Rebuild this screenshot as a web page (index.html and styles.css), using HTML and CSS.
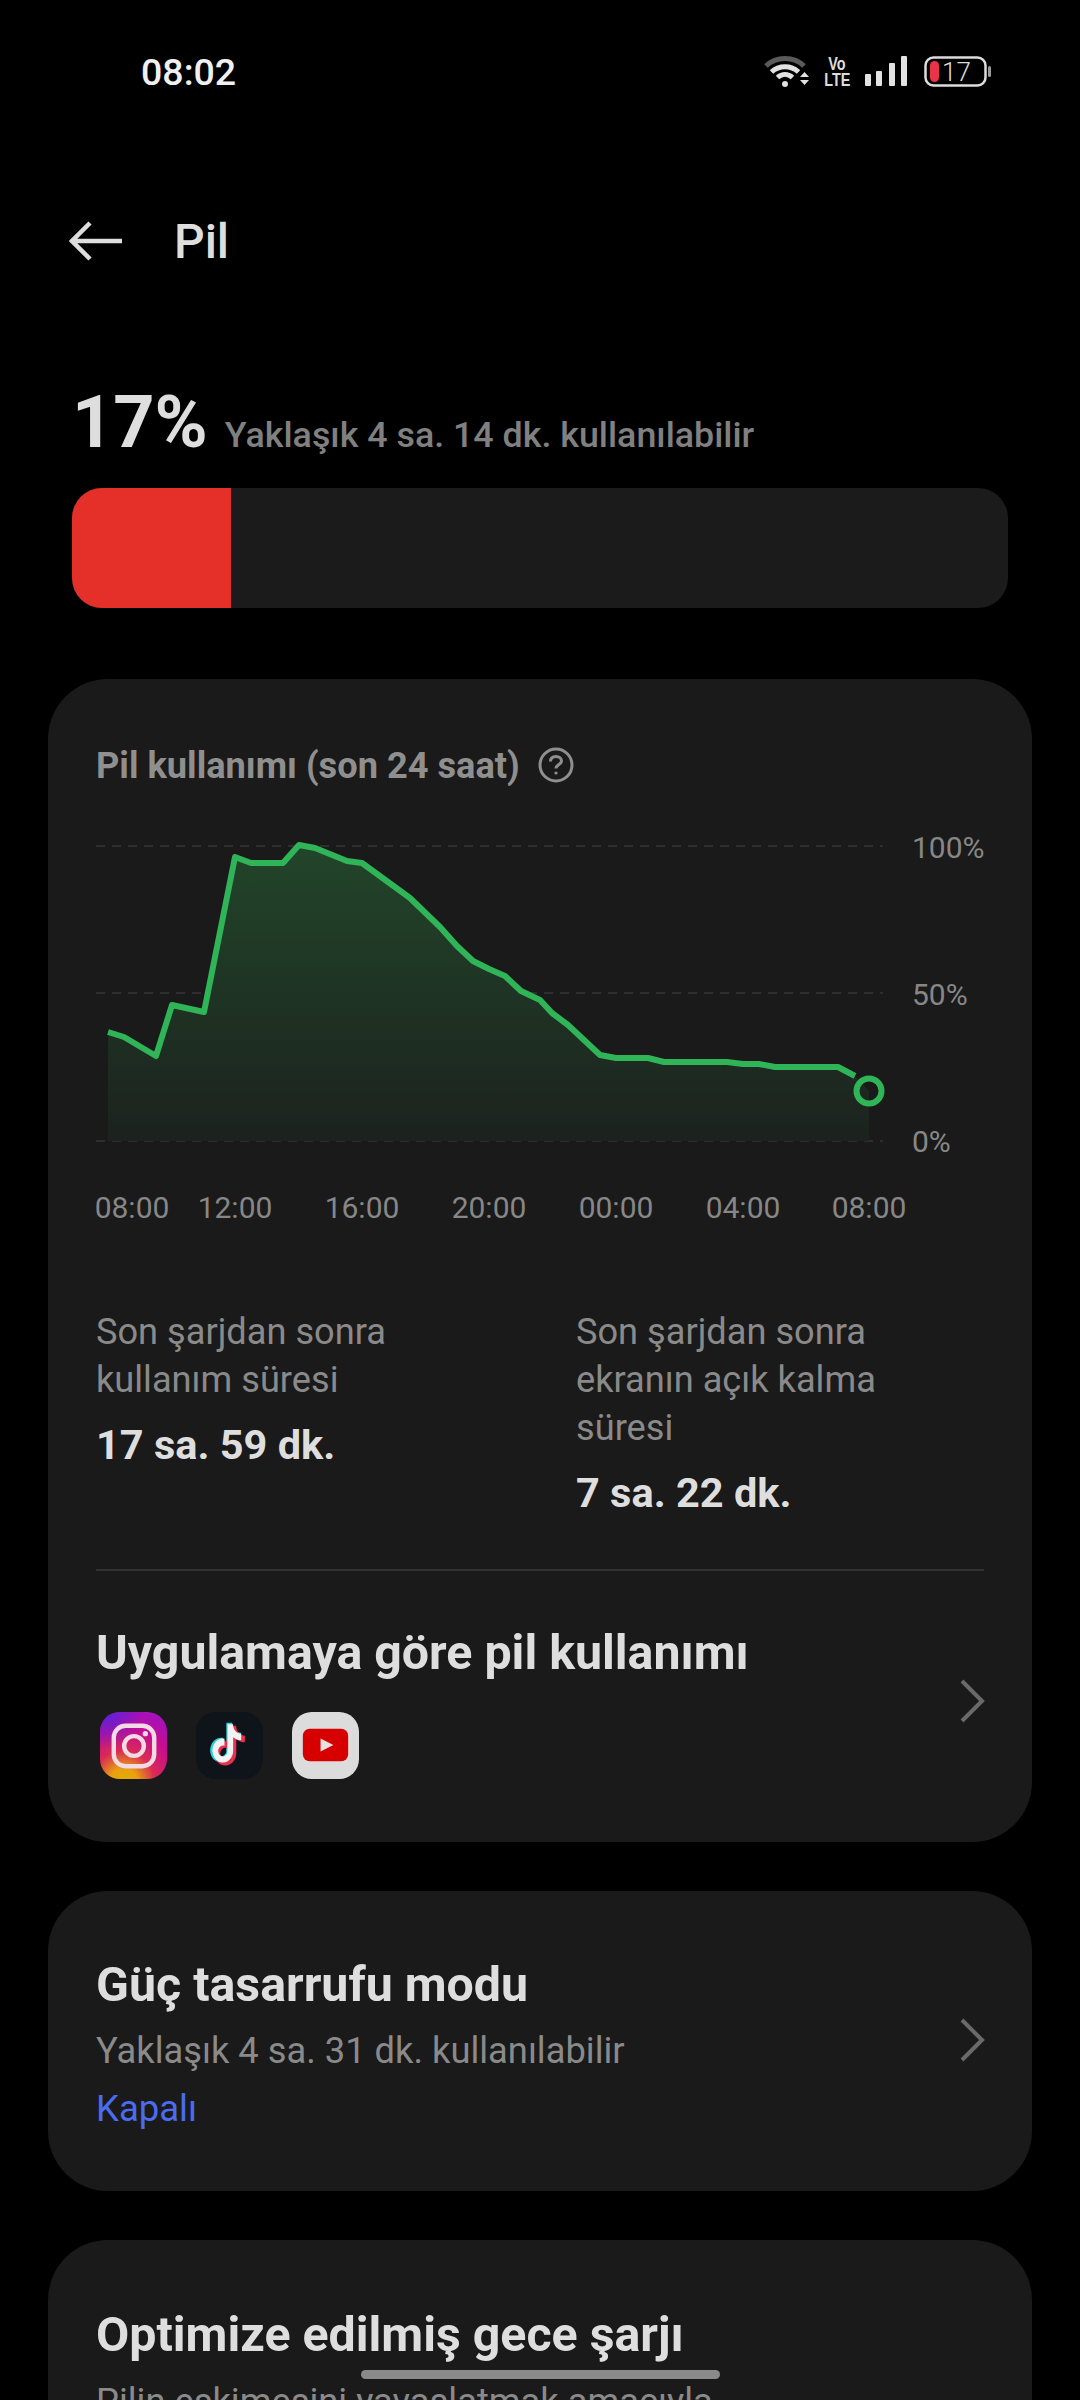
FILE: index.html
```html
<!DOCTYPE html>
<html lang="tr">
<head>
<meta charset="utf-8">
<title>Pil</title>
<link rel="stylesheet" href="styles.css">
</head>
<body>
<div class="screen">
  <header class="status">
    <span class="clock">08:02</span>
    <div class="status-icons">
      <svg class="ic-wifi" width="46" height="34" viewBox="0 0 46 34">
        <path d="M2 11C12 1 30 1 40 11" class="wifi-dim"/>
        <path d="M7.500 17C15 10 27 10 34.500 17" class="wifi-arc"/>
        <path d="M13.500 22.500C18 18.500 24 18.500 28.500 22.500" class="wifi-arc"/>
        <circle cx="21" cy="29" r="3" class="wifi-fill"/>
        <path d="M36 22L45 22L40.500 17Z M36 25L45 25L40.500 30Z" class="wifi-fill"/>
      </svg>
      <div class="volte"><span>Vo</span><span>LTE</span></div>
      <svg class="ic-signal" width="44" height="32" viewBox="0 0 44 32">
        <rect x="1" y="18" width="6" height="12" rx="1"/>
        <rect x="12" y="15" width="6" height="15" rx="1"/>
        <rect x="25" y="7" width="6" height="23" rx="1"/>
        <rect x="37" y="0" width="6" height="30" rx="1"/>
      </svg>
      <svg class="ic-battery" width="68" height="32" viewBox="0 0 68 32">
        <rect x="1.500" y="1.500" width="60" height="28" rx="8" class="batt-shell"/>
        <rect x="6" y="5" width="9" height="21" rx="4.500" class="batt-level"/>
        <rect x="64" y="10" width="3" height="11" rx="1.500" class="batt-nub"/>
        <text x="18" y="25" class="batt-text">17</text>
      </svg>
    </div>
  </header>

  <div class="appbar">
    <svg class="back" width="54" height="40" viewBox="0 0 54 40">
      <path d="M53 20H3M21 2L3 20L21 38"/>
    </svg>
    <h1 class="page-title">Pil</h1>
  </div>

  <section class="level">
    <div class="level-text">
      <span class="level-num">17%</span>
      <span class="level-note">Yaklaşık 4 sa. 14 dk. kullanılabilir</span>
    </div>
    <div class="bar"><div class="bar-fill" style="width:17%"></div></div>
  </section>

  <section class="card usage">
    <div class="usage-head">
      <span class="usage-title">Pil kullanımı (son 24 saat)</span>
      <svg class="help" width="36" height="36" viewBox="0 0 36 36">
        <circle cx="18" cy="18" r="16"/>
        <path d="M12.500 14.500C12.500 11 15 9.500 18 9.500C21 9.500 23.500 11.200 23.500 14C23.500 17.500 18 17.500 18 21.500"/>
        <circle cx="18" cy="26" r="1.600" class="help-dot"/>
      </svg>
    </div>

    <svg class="chart" width="888" height="400" viewBox="96 830 888 400">
      <defs>
        <linearGradient id="area" x1="0" y1="0" x2="0" y2="1">
          <stop offset="0" stop-color="#22452a"/>
          <stop offset="1" stop-color="#1c221e"/>
        </linearGradient>
      </defs>
      <path class="grid" d="M96 846H883M96 993H883M96 1141H883"/>
      <path class="area" fill="url(#area)" d="M108 1032L124 1037L156 1056L172 1005L204 1012L235 857L251 863L283 863L299 845L315 848L347 861L362 863L410 898L440 927L457 946L473 961L489 969L505 976L521 991L540 1000L552 1013L568 1025L600 1055L616 1058L648 1058L664 1062L727 1062L743 1064L759 1064L775 1067L838 1067L855 1076L869 1091V1141H108Z"/>
      <path class="line" d="M108 1032L124 1037L156 1056L172 1005L204 1012L235 857L251 863L283 863L299 845L315 848L347 861L362 863L410 898L440 927L457 946L473 961L489 969L505 976L521 991L540 1000L552 1013L568 1025L600 1055L616 1058L648 1058L664 1062L727 1062L743 1064L759 1064L775 1067L838 1067L855 1076"/>
      <circle class="dot" cx="869" cy="1091" r="12.500"/>
      <text class="axis" x="912" y="858">100%</text>
      <text class="axis" x="912" y="1005">50%</text>
      <text class="axis" x="912" y="1152">0%</text>
      <text class="axis mid" x="132" y="1218">08:00</text>
      <text class="axis mid" x="235" y="1218">12:00</text>
      <text class="axis mid" x="362" y="1218">16:00</text>
      <text class="axis mid" x="489" y="1218">20:00</text>
      <text class="axis mid" x="616" y="1218">00:00</text>
      <text class="axis mid" x="743" y="1218">04:00</text>
      <text class="axis mid" x="869" y="1218">08:00</text>
    </svg>

    <div class="stats">
      <div class="stat">
        <p class="stat-label">Son şarjdan sonra kullanım süresi</p>
        <p class="stat-value">17 sa. 59 dk.</p>
      </div>
      <div class="stat">
        <p class="stat-label">Son şarjdan sonra ekranın açık kalma süresi</p>
        <p class="stat-value">7 sa. 22 dk.</p>
      </div>
    </div>

    <div class="by-app">
      <div class="row-body">
        <h2 class="row-title">Uygulamaya göre pil kullanımı</h2>
        <div class="apps">
          <svg class="app" width="67" height="67" viewBox="0 0 68 68">
            <defs>
              <radialGradient id="ig-warm" cx="0.35" cy="1.05" r="1.050">
                <stop offset="0" stop-color="#e0b000"/>
                <stop offset="0.2" stop-color="#e8a010"/>
                <stop offset="0.45" stop-color="#d92a55"/>
                <stop offset="0.75" stop-color="#c80d90"/>
                <stop offset="1" stop-color="#a810b8"/>
              </radialGradient>
              <radialGradient id="ig-cool" cx="0.1" cy="0" r="0.55">
                <stop offset="0" stop-color="#5a22d8"/>
                <stop offset="1" stop-color="#5a22d8" stop-opacity="0"/>
              </radialGradient>
            </defs>
            <rect width="68" height="68" rx="20" fill="url(#ig-warm)"/>
            <rect width="68" height="68" rx="20" fill="url(#ig-cool)"/>
            <rect class="ig-line" x="14" y="14" width="41" height="41" rx="12"/>
            <circle class="ig-line" cx="34.500" cy="34.500" r="10"/>
            <circle class="ig-dot" cx="46" cy="22" r="2.700"/>
          </svg>
          <svg class="app" width="67" height="67" viewBox="0 0 68 68">
            <defs>
              <path id="note" d="M12.525.02c1.31-.02 2.61-.01 3.91-.02.08 1.530.63 3.090 1.750 4.170 1.120 1.110 2.700 1.620 4.240 1.790v4.030c-1.440-.05-2.890-.35-4.200-.97-.57-.26-1.100-.59-1.620-.93-.01 2.920.01 5.840-.02 8.750-.08 1.400-.54 2.790-1.350 3.940-1.310 1.920-3.580 3.170-5.910 3.210-1.430.08-2.860-.31-4.080-1.030-2.020-1.190-3.440-3.370-3.650-5.710-.02-.5-.03-1-.01-1.490.18-1.900 1.120-3.720 2.580-4.960 1.660-1.440 3.980-2.130 6.150-1.720.02 1.480-.04 2.960-.04 4.440-.99-.32-2.150-.23-3.020.37-.63.41-1.110 1.040-1.360 1.750-.21.51-.15 1.070-.14 1.610.24 1.640 1.820 3.020 3.500 2.870 1.120-.01 2.190-.66 2.770-1.610.19-.33.4-.67.41-1.060.1-1.790.06-3.570.07-5.360.01-4.030-.01-8.050.02-12.070z"/>
            </defs>
            <rect width="68" height="68" rx="20" fill="#0f131a"/>
            <use href="#note" class="tt-c" transform="translate(12 11) scale(1.500 1.680)"/>
            <use href="#note" class="tt-r" transform="translate(16 14) scale(1.500 1.680)"/>
            <use href="#note" class="tt-w" transform="translate(14.500 12.500) scale(1.400 1.620)"/>
          </svg>
          <svg class="app" width="67" height="67" viewBox="0 0 68 68">
            <rect width="68" height="68" rx="20" fill="#dcdcdc"/>
            <rect x="11" y="17" width="46" height="33" rx="7" fill="#d60000"/>
            <path d="M29 27L42 33.500L29 40Z" fill="#e8e0e0"/>
          </svg>
        </div>
      </div>
      <svg class="chev" width="26" height="44" viewBox="0 0 26 44"><path d="M3 2L23 22L3 42"/></svg>
    </div>
  </section>

  <section class="card saver">
    <div class="row-body">
      <h2 class="row-title">Güç tasarrufu modu</h2>
      <p class="row-note">Yaklaşık 4 sa. 31 dk. kullanılabilir</p>
      <p class="row-state">Kapalı</p>
    </div>
    <svg class="chev" width="26" height="44" viewBox="0 0 26 44"><path d="M3 2L23 22L3 42"/></svg>
  </section>

  <section class="card night">
    <h2 class="row-title">Optimize edilmiş gece şarjı</h2>
    <p class="row-note night-note">Pilin eskimesini yavaşlatmak amacıyla</p>
  </section>

  <div class="home-bar"></div>
</div>
</body>
</html>
```
FILE: styles.css
```css
* { box-sizing: border-box; margin: 0; padding: 0; }

html, body { background: #000; }

body {
  width: 1080px;
  height: 2400px;
  overflow: hidden;
  font-family: Roboto, "Noto Sans", sans-serif;
}

.screen {
  position: relative;
  width: 1080px;
  height: 2400px;
  overflow: hidden;
  background: #000;
  color: #dedede;
}

/* status bar */
.status {
  display: flex;
  align-items: center;
  justify-content: space-between;
  height: 144px;
  padding: 0 88px 0 141px;
}

.clock { font-size: 37.500px; font-weight: 500; color: #f0f0f0; }

.status-icons { display: flex; align-items: center; }

.ic-wifi { margin-right: 15px; fill: none; }
.wifi-dim { fill: none; stroke: #5a5a5a; stroke-width: 5; }
.wifi-arc { fill: none; stroke: #e2e2e2; stroke-width: 5; }
.wifi-fill { fill: #e2e2e2; }

.volte {
  display: flex;
  flex-direction: column;
  align-items: center;
  width: 24px;
  margin-right: 15px;
  font-family: "Liberation Sans", sans-serif;
  font-weight: 700;
  color: #dcdcdc;
  font-size: 18px;
  line-height: 16px;
}

/* the network tag is set in narrow capitals */
.volte span { display: block; transform: scaleX(0.8); }

.ic-signal { margin-right: 16px; fill: #e2e2e2; }

.batt-shell { fill: none; stroke: #dcdcdc; stroke-width: 2.500; }
.batt-level { fill: #ea3348; }
.batt-nub { fill: #9a9a9a; }
.batt-text { font-size: 26px; fill: #dcdcdc; font-weight: 300; }

/* app bar */
.appbar {
  display: flex;
  align-items: center;
  height: 52px;
  margin-top: 71px;
  padding-left: 69px;
}

.back { fill: none; margin-right: 51px; }
.back path { fill: none; stroke: #dedede; stroke-width: 4.500; }

.page-title { font-size: 48px; font-weight: 500; color: #dedede; }

/* current level */
.level { padding: 0 72px; margin-top: 114px; }

.level-text {
  display: flex;
  align-items: baseline;
  gap: 17px;
  height: 84px;
  line-height: 84px;
}

.level-num { font-size: 72px; font-weight: 700; color: #dedede; }
.level-note { font-size: 35.800px; font-weight: 500; color: #808080; }

.bar {
  height: 120px;
  margin-top: 23px;
  border-radius: 30px;
  background: #1b1b1b;
  overflow: hidden;
}

.bar-fill { height: 100%; background: #e52f29; }

/* cards */
.card {
  margin: 0 48px;
  background: #1a1a1a;
  border-radius: 60px;
}

.usage {
  margin-top: 71px;
  padding: 63px 48px 63px;
}

.usage-head { display: flex; align-items: center; gap: 18px; height: 46px; }
.usage-title { font-size: 36.200px; font-weight: 700; color: #8f8f8f; }

.help { fill: none; }
.help circle, .help path { fill: none; stroke: #8f8f8f; stroke-width: 3; }
.help .help-dot { fill: #8f8f8f; stroke: none; }

.chart { display: block; margin-top: 42px; }

.grid { fill: none; stroke: #2e2e2e; stroke-width: 2; stroke-dasharray: 9 7; }
.line { fill: none; stroke: #2fb457; stroke-width: 6; stroke-linejoin: round; }
.dot { fill: none; stroke: #2fb457; stroke-width: 6; }
.axis { font-family: Roboto, sans-serif; font-size: 30px; fill: #878787; }
.mid { text-anchor: middle; }

.stats {
  display: grid;
  grid-template-columns: 480px 1fr;
  margin-top: 78px;
  padding-bottom: 52px;
}

.stat-label { max-width: 390px; font-size: 36.200px; line-height: 48px; color: #8a8a8a; }
.stat-value { font-size: 41.500px; font-weight: 700; line-height: 48px; margin-top: 17px; color: #dedede; }

.by-app {
  display: flex;
  align-items: center;
  justify-content: space-between;
  padding-top: 54px;
  border-top: 2px solid #333;
}

.row-body { flex: 1; }

.row-title { font-size: 48.300px; font-weight: 700; line-height: 56px; color: #dedede; }

.apps { display: flex; gap: 29px; margin-top: 31px; padding-left: 4px; }
.app { display: block; }

.ig-line { fill: none; stroke: #f3dbe4; stroke-width: 4.500; }
.ig-dot { fill: #f3dbe4; }

.tt-c { fill: #25d4d8; }
.tt-r { fill: #e8304f; }
.tt-w { fill: #f2f2f2; }

.chev { flex: none; fill: none; position: relative; left: 1px; top: -1px; }
.chev path { fill: none; stroke: #6a6a6a; stroke-width: 4; }

.saver {
  display: flex;
  align-items: center;
  margin-top: 49px;
  height: 300px;
  padding: 0 48px;
}

.saver .row-body { margin-top: 8px; }

.row-note { font-size: 36.300px; line-height: 48px; margin-top: 14px; color: #8a8a8a; }
.row-state { font-size: 36.500px; line-height: 48px; margin-top: 10px; color: #4a6cf0; }

.night {
  margin-top: 49px;
  height: 400px;
  padding: 67px 48px 0;
}

.night-note { margin-top: 15px; }

.home-bar {
  position: absolute;
  left: 361px;
  top: 2370px;
  width: 359px;
  height: 9px;
  border-radius: 5px;
  background: #8a8a8a;
}
```
